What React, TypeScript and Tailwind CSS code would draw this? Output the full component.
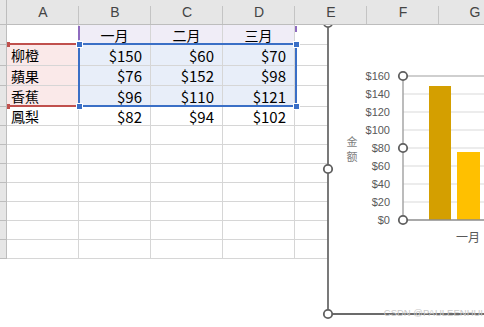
import React from 'react'

const cols = ['A', 'B', 'C', 'D', 'E', 'F', 'G']

const data: string[][] = [
  ['', '一月', '二月', '三月'],
  ['柳橙', '$150', '$60', '$70'],
  ['蘋果', '$76', '$152', '$98'],
  ['香蕉', '$96', '$110', '$121'],
  ['鳳梨', '$82', '$94', '$102'],
]

// heights measured from the sheet (border included)
const rowHeights = ['h-[20px]', 'h-[21px]', 'h-[20px]', 'h-[21px]', 'h-[19px]', 'h-[19px]', 'h-[19px]', 'h-[19px]', 'h-[19px]', 'h-[19px]', 'h-[19px]', 'h-[19px]']

function cellFill(r: number, c: number) {
  if (r === 0 && c >= 1 && c <= 3) return 'bg-[#f0edf7]'
  if (r >= 1 && r <= 3 && c === 0) return 'bg-[#fae9e9]'
  if (r >= 1 && r <= 3 && c >= 1 && c <= 3) return 'bg-[#e8eef9]'
  return 'bg-white'
}

function Cell({ r, c }: { r: number; c: number }) {
  const v = data[r]?.[c] ?? ''
  const isNum = v.startsWith('$')
  const isHead = r === 0
  return (
    <div
      className={`w-[72px] shrink-0 h-full border-r border-b border-[#d6d6d6] flex items-center px-[4px] ${cellFill(r, c)} ${
        isNum ? 'justify-end pr-[8px] text-[15px]' : isHead ? 'justify-center text-[14px]' : 'justify-start text-[14px]'
      }`}
    >
      <span className="leading-none text-black">{v}</span>
    </div>
  )
}

function Chart() {
  const ticks = ['$160', '$140', '$120', '$100', '$80', '$60', '$40', '$20', '$0']
  return (
    <svg className="absolute left-[320px] top-0 z-10" width="164" height="327" viewBox="320 0 164 327">
      <rect x="328" y="20" width="160" height="295" fill="#fff" />
      {/* plot area */}
      <line x1="403" y1="76" x2="484" y2="76" stroke="#bfbfbf" strokeWidth="1.5" />
      {[94, 112, 130, 148, 166, 184, 202].map((y) => (
        <line key={y} x1="403" y1={y} x2="484" y2={y} stroke="#d9d9d9" strokeWidth="1" />
      ))}
      <rect x="429" y="86" width="22" height="134" fill="#d49f00" />
      <rect x="457" y="152" width="23" height="68" fill="#ffc000" />
      <line x1="403" y1="76" x2="403" y2="220" stroke="#a6a6a6" strokeWidth="1.5" />
      <line x1="403" y1="220" x2="484" y2="220" stroke="#8c8c8c" strokeWidth="1.5" />
      {ticks.map((t, i) => (
        <text
          key={t}
          x="390"
          y={76 + i * 18}
          dy="4"
          textAnchor="end"
          fontSize="11"
          fill="#595959"
          fontFamily="'Liberation Sans', Arial, sans-serif"
        >
          {t}
        </text>
      ))}
      <text textAnchor="middle" fontSize="11" fill="#7f7f7f" fontFamily="'Noto Sans CJK SC', sans-serif">
        <tspan x="352" y="146">金</tspan>
        <tspan x="352" y="160.5">额</tspan>
      </text>
      <text x="468" y="237" dy="4.5" textAnchor="middle" fontSize="12" fill="#595959" fontFamily="'Noto Sans CJK SC', sans-serif">
        一月
      </text>
      {/* chart frame */}
      <line x1="328" y1="20" x2="328" y2="314" stroke="#6b6b6b" strokeWidth="1.8" />
      <line x1="328" y1="314" x2="484" y2="314" stroke="#6b6b6b" strokeWidth="1.8" />
      {[
        [328, 23],
        [328, 169],
        [328, 314],
        [403, 76],
        [403, 148],
        [403, 220],
      ].map(([x, y]) => (
        <circle key={`${x}-${y}`} cx={x} cy={y} r="4.2" fill="#fff" stroke="#5f5f5f" strokeWidth="1.8" />
      ))}
    </svg>
  )
}

export default function App() {
  return (
    <div className="relative w-[484px] h-[327px] overflow-hidden bg-white font-['Noto_Sans_CJK_TC','Noto_Sans',sans-serif]">
      {/* column headers */}
      <div className="relative z-20 flex h-[25px] bg-[#e6e6e6] border-b border-[#bdbdbd]">
        <div className="w-[7px] shrink-0 h-full border-r border-[#bdbdbd]" />
        {cols.map((c) => (
          <div
            key={c}
            className="relative w-[72px] shrink-0 h-full flex items-center justify-center text-[14px] text-[#444] font-['Liberation_Sans',Arial,sans-serif]"
          >
            {c}
            <div className="absolute right-0 top-[6px] bottom-0 w-px bg-[#c4c4c4]" />
          </div>
        ))}
      </div>

      {/* rows */}
      {rowHeights.map((h, r) => (
        <div key={r} className={`flex ${h}`}>
          <div className="w-[7px] shrink-0 h-full bg-[#e6e6e6] border-r border-b border-[#bdbdbd]" />
          {cols.map((_, c) => (
            <Cell key={c} r={r} c={c} />
          ))}
        </div>
      ))}

      {/* purple range marks */}
      <div className="absolute left-[78px] top-[26px] w-[2px] h-[14px] bg-[#8e6bbf]" />
      <div className="absolute left-[295px] top-[26px] w-[2px] h-[6px] bg-[#8e6bbf]" />

      {/* red range */}
      <div className="absolute left-[8px] top-[43px] w-[70px] h-[2px] bg-[#c0504d]" />
      <div className="absolute left-[8px] top-[105px] w-[70px] h-[2px] bg-[#c0504d]" />
      <div className="absolute left-[7px] top-[42px] w-[3px] h-[5px] bg-[#c0504d]" />
      <div className="absolute left-[7px] top-[104px] w-[3px] h-[5px] bg-[#c0504d]" />

      {/* blue range */}
      <div className="absolute left-[78px] top-[43px] w-[219px] h-[64px] border-2 border-[#3a6fc6]" />
      {[
        'left-[76px] top-[41px]',
        'left-[293px] top-[41px]',
        'left-[76px] top-[103px]',
        'left-[293px] top-[103px]',
      ].map((p) => (
        <div key={p} className={`absolute ${p} w-[7px] h-[7px] bg-[#3a6fc6] border border-white`} />
      ))}

      <Chart />

      <div className="absolute z-10 right-[1px] top-[308px] whitespace-nowrap text-[9.5px] leading-none text-[#c9c9c9] font-['Liberation_Sans',Arial,sans-serif]">
        CSDN @PAULEENHUI
      </div>
    </div>
  )
}
